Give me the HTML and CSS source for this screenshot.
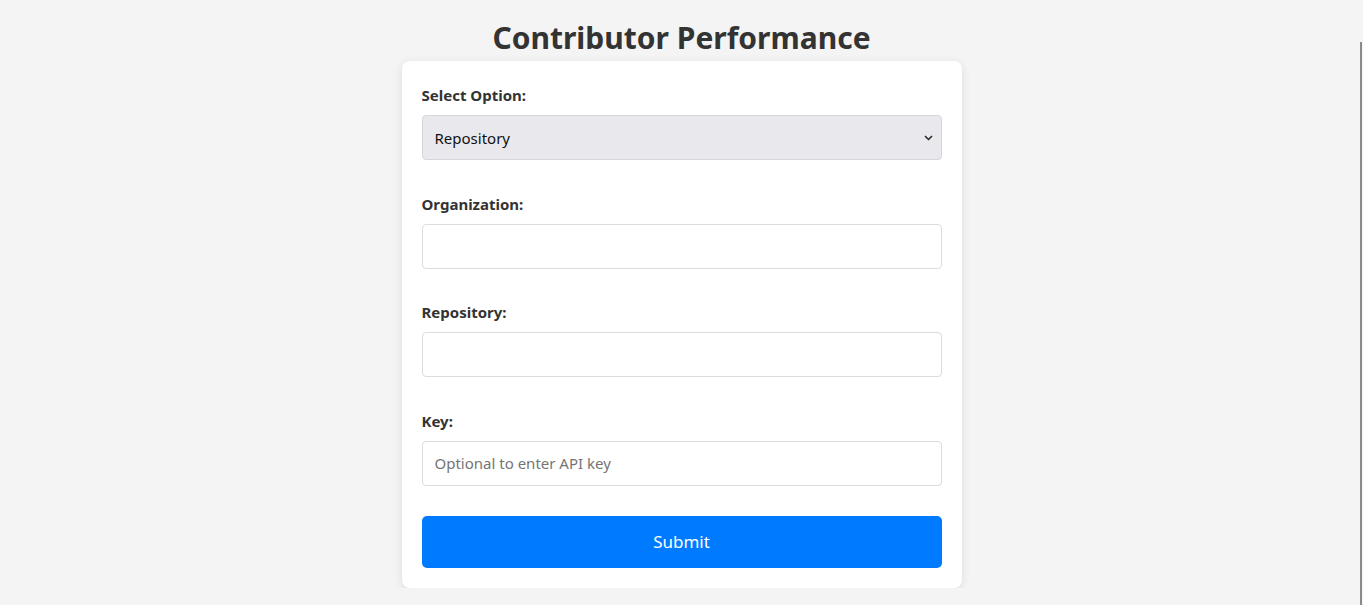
FILE: index.html
```html
<!DOCTYPE html>
<html lang="en">
<head>
<meta charset="utf-8">
<title>Contributor Performance</title>
<link rel="stylesheet" href="styles.css">
</head>
<body>
<div class="page">
  <h1 class="title">Contributor Performance</h1>
  <form class="card">
    <div class="group">
      <label class="label" for="opt">Select Option:</label>
      <div class="select-wrap">
        <select id="opt" class="select">
          <option>Repository</option>
          <option>Organization</option>
        </select>
        <svg class="chev" width="9" height="6" viewBox="0 0 9 6"><path d="M1 1 L4.5 4.5 L8 1" fill="none" stroke="#222" stroke-width="1.5"/></svg>
      </div>
    </div>
    <div class="group">
      <label class="label" for="org">Organization:</label>
      <input id="org" class="input" type="text">
    </div>
    <div class="group">
      <label class="label" for="repo">Repository:</label>
      <input id="repo" class="input" type="text">
    </div>
    <div class="group">
      <label class="label" for="key">Key:</label>
      <input id="key" class="input" type="text" placeholder="Optional to enter API key">
    </div>
    <button class="submit" type="button">Submit</button>
  </form>
</div>
<div class="scrollbar"></div>
</body>
</html>
```
FILE: styles.css
```css
html, body {
  margin: 0;
  padding: 0;
  background: #f4f4f4;
  font-family: "Noto Sans", "Open Sans", sans-serif;
  color: #333;
}
.page {
  display: flex;
  flex-direction: column;
  align-items: center;
  padding-top: 16px;
}
.title {
  margin: 0;
  font-size: 30px;
  line-height: 44px;
  font-weight: 700;
  color: #333;
}
.card {
  margin-top: 1px;
  width: 560px;
  box-sizing: border-box;
  background: #fff;
  border-radius: 8px;
  box-shadow: 0 2px 10px rgba(0,0,0,0.1);
  padding: 24px 20px 20px;
  display: flex;
  flex-direction: column;
  gap: 33.67px;
}
.group {
  display: flex;
  flex-direction: column;
}
.label {
  font-size: 15px;
  font-weight: 700;
  line-height: 20px;
  margin-bottom: 10px;
  color: #333;
}
.select-wrap {
  position: relative;
}
.select, .input {
  width: 100%;
  height: 45px;
  box-sizing: border-box;
  border: 1px solid #dcdcdc;
  border-radius: 4px;
  padding: 0 12px;
  font-family: inherit;
  font-size: 15px;
  color: #111;
  background: #fff;
  outline: none;
}
.select {
  appearance: none;
  -webkit-appearance: none;
  background: #e9e9ed;
  border-color: #d6d6da;
}
.chev {
  position: absolute;
  right: 9px;
  top: 20px;
}
.input::placeholder {
  color: #757575;
}
.submit {
  margin-top: -3.67px;
  height: 52px;
  border: 0;
  border-radius: 5px;
  background: #007bff;
  color: #fff;
  font-family: inherit;
  font-size: 17px;
}
.scrollbar {
  position: fixed;
  right: 1px;
  top: 42px;
  bottom: 0;
  width: 2px;
  background: #8a8a8a;
}
```
